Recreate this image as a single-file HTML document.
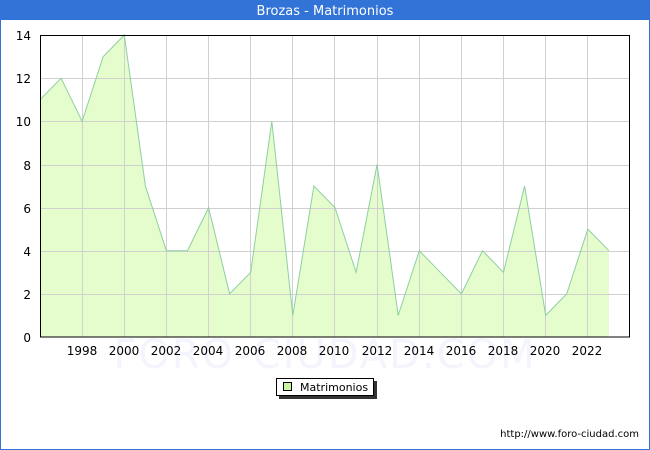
<!DOCTYPE html>
<html><head><meta charset="utf-8"><style>
html,body{margin:0;padding:0;background:#fff}
svg{display:block}
text{font-family:"DejaVu Sans","Liberation Sans",sans-serif}
</style></head><body>
<svg width="650" height="450" viewBox="0 0 650 450" xmlns="http://www.w3.org/2000/svg">
<rect x="0" y="0" width="650" height="450" fill="#fff"/>
<rect x="0.5" y="0.5" width="649" height="449" fill="none" stroke="#3173D6"/>
<rect x="0" y="0" width="650" height="20" fill="#3173D6"/>
<text x="325" y="15" font-size="13" fill="#fff" text-anchor="middle">Brozas - Matrimonios</text>
<text x="325" y="368" font-size="40" fill="#f4f5fc" text-anchor="middle" letter-spacing="2">FORO-CIUDAD.COM</text>
<polygon fill="#e5fccc" points="40,337 40,99.7 61.1,78.2 82.1,121.3 103.2,56.6 124.3,35 145.4,186 166.4,250.7 187.5,250.7 208.6,207.6 229.6,293.9 250.7,272.3 271.8,121.3 292.8,315.4 313.9,186 335,207.6 356.1,272.3 377.1,164.4 398.2,315.4 419.3,250.7 440.3,272.3 461.4,293.9 482.5,250.7 503.5,272.3 524.6,186 545.7,315.4 566.7,293.9 587.8,229.1 608.9,250.7 608.9,337"/>
<g stroke="#d0d0d0" stroke-width="1">
<line x1="40" y1="294.5" x2="630" y2="294.5"/><line x1="40" y1="251.5" x2="630" y2="251.5"/>
<line x1="40" y1="208.5" x2="630" y2="208.5"/><line x1="40" y1="165.5" x2="630" y2="165.5"/>
<line x1="40" y1="121.5" x2="630" y2="121.5"/><line x1="40" y1="78.5" x2="630" y2="78.5"/>
<line x1="82.5" y1="35" x2="82.5" y2="337"/><line x1="124.5" y1="35" x2="124.5" y2="337"/>
<line x1="166.5" y1="35" x2="166.5" y2="337"/><line x1="208.5" y1="35" x2="208.5" y2="337"/>
<line x1="250.5" y1="35" x2="250.5" y2="337"/><line x1="292.5" y1="35" x2="292.5" y2="337"/>
<line x1="334.5" y1="35" x2="334.5" y2="337"/><line x1="377.5" y1="35" x2="377.5" y2="337"/>
<line x1="419.5" y1="35" x2="419.5" y2="337"/><line x1="461.5" y1="35" x2="461.5" y2="337"/>
<line x1="503.5" y1="35" x2="503.5" y2="337"/><line x1="545.5" y1="35" x2="545.5" y2="337"/>
<line x1="587.5" y1="35" x2="587.5" y2="337"/>
</g>
<polyline fill="none" stroke="#8ecfa0" stroke-width="1" points="40,99.7 61.1,78.2 82.1,121.3 103.2,56.6 124.3,35 145.4,186 166.4,250.7 187.5,250.7 208.6,207.6 229.6,293.9 250.7,272.3 271.8,121.3 292.8,315.4 313.9,186 335,207.6 356.1,272.3 377.1,164.4 398.2,315.4 419.3,250.7 440.3,272.3 461.4,293.9 482.5,250.7 503.5,272.3 524.6,186 545.7,315.4 566.7,293.9 587.8,229.1 608.9,250.7"/>
<rect x="40.5" y="35.5" width="589" height="301.5" fill="none" stroke="#000"/>
<g font-size="12" fill="#000" text-anchor="end">
<text x="31" y="342">0</text><text x="31" y="299">2</text><text x="31" y="256">4</text>
<text x="31" y="213">6</text><text x="31" y="170">8</text><text x="31" y="126">10</text>
<text x="31" y="83">12</text><text x="31" y="40">14</text>
</g>
<g font-size="12" fill="#000" text-anchor="middle">
<text x="82" y="355">1998</text><text x="124" y="355">2000</text><text x="166" y="355">2002</text>
<text x="208" y="355">2004</text><text x="250" y="355">2006</text><text x="292" y="355">2008</text>
<text x="334" y="355">2010</text><text x="377" y="355">2012</text><text x="419" y="355">2014</text>
<text x="461" y="355">2016</text><text x="503" y="355">2018</text><text x="545" y="355">2020</text>
<text x="587" y="355">2022</text>
</g>
<rect x="279" y="381" width="98" height="18" fill="#333"/>
<rect x="276.5" y="378.5" width="97" height="17" fill="#fff" stroke="#000"/>
<rect x="283.5" y="382.5" width="8" height="8" fill="#c8f5a0" stroke="#000"/>
<text x="300" y="391" font-size="11" fill="#000">Matrimonios</text>
<text x="639" y="437" font-size="10" fill="#000" text-anchor="end">http://www.foro-ciudad.com</text>
</svg>
</body></html>
